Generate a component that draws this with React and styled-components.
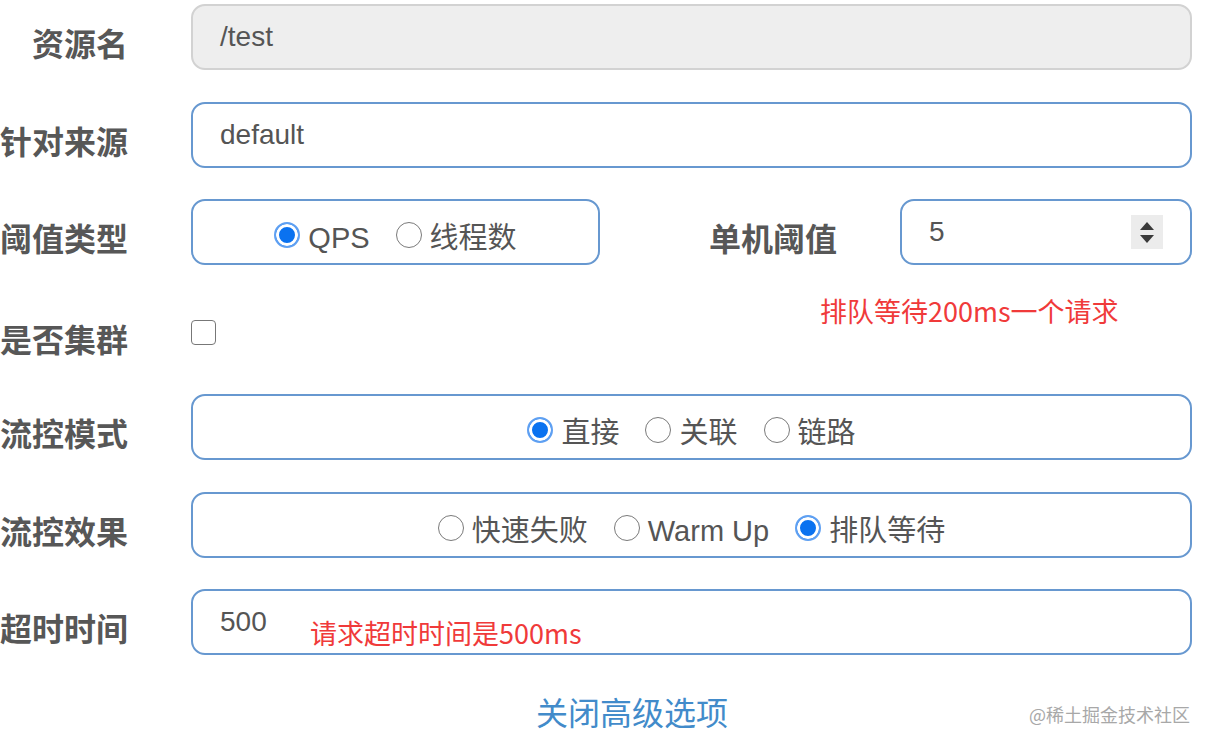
import styled, { createGlobalStyle } from "styled-components";

const GlobalStyle = createGlobalStyle`
  html, body {
    margin: 0;
    background: #fff;
  }
  body {
    font-family: "Liberation Sans", "Noto Sans CJK SC", sans-serif;
  }
`;

const Form = styled.div`
  position: relative;
  width: 1192px;
  padding-top: 4px;
  display: flex;
  flex-direction: column;
  gap: 31.5px;
`;

const Row = styled.div`
  display: flex;
  align-items: center;
  gap: 63px;
  min-height: 66px;
  box-sizing: border-box;
  padding-top: ${(p) => p.$pad || 0}px;
`;

const Label = styled.div`
  flex: none;
  width: ${(p) => p.$width || "128px"};
  text-align: right;
  padding-top: 10px;
  font-family: "Noto Sans CJK SC", sans-serif;
  font-size: 32px;
  font-weight: 700;
  color: #575757;
  white-space: nowrap;
  line-height: 40px;
`;

const Field = styled.div`
  position: relative;
  flex: ${(p) => (p.$width ? "none" : "1")};
  width: ${(p) => p.$width || "auto"};
  height: 66px;
  box-sizing: border-box;
  display: flex;
  align-items: center;
  justify-content: ${(p) => (p.$center ? "center" : "flex-start")};
  gap: ${(p) => (p.$center ? "26px" : "0")};
  padding: ${(p) => (p.$center ? "12px 0 0" : "0 27px 0 27px")};
  border: 2px solid ${(p) => (p.$disabled ? "#d2d2d2" : "#6798d0")};
  border-radius: 14px;
  background: ${(p) => (p.$disabled ? "#eeeeee" : "#fff")};
  font-size: 28px;
  color: #555;
`;

const Split = styled.div`
  flex: 1;
  display: flex;
  align-items: center;
`;

const SideLabel = styled(Label)`
  flex: 1;
  width: auto;
  margin-right: 63px;
`;

const Option = styled.label`
  display: flex;
  align-items: center;
  gap: 8px;
  font-family: "Liberation Sans", "Noto Sans CJK SC", sans-serif;
  font-size: 29px;
  color: #555;
  line-height: 40px;
  white-space: nowrap;
`;

const RadioDot = styled.span`
  flex: none;
  width: 26px;
  height: 26px;
  box-sizing: border-box;
  border-radius: 50%;
  margin-top: -6px;
  border: ${(p) => (p.$checked ? "2px solid #5fa0f2" : "1.5px solid #7a7a7a")};
  background: ${(p) => (p.$checked ? "#0a72f0" : "#fff")};
  box-shadow: ${(p) => (p.$checked ? "inset 0 0 0 3px #fff" : "none")};
`;

const Checkbox = styled.span`
  width: 25px;
  height: 25px;
  box-sizing: border-box;
  border: 1.5px solid #777;
  border-radius: 4px;
  background: #fff;
`;

const Spinner = styled.span`
  margin-left: auto;
  width: 32px;
  height: 34px;
  background: #ececec;
  display: flex;
  flex-direction: column;
  align-items: center;
  justify-content: center;
  gap: 5px;
`;

const Arrow = styled.span`
  width: 0;
  height: 0;
  border-left: 7px solid transparent;
  border-right: 7px solid transparent;
  ${(p) =>
    p.$up ? "border-bottom: 8px solid #3a3a3a;" : "border-top: 8px solid #3a3a3a;"}
`;

const Note = styled.span`
  position: absolute;
  left: ${(p) => p.$left}px;
  top: ${(p) => p.$top}px;
  font-family: "Noto Sans CJK SC", sans-serif;
  font-size: 27px;
  line-height: 32px;
  color: #f03a3a;
  white-space: nowrap;
`;

const Footer = styled.div`
  position: relative;
  height: 48px;
  display: flex;
  justify-content: center;
  padding-left: 72px;
`;

const Link = styled.a`
  font-family: "Noto Sans CJK SC", sans-serif;
  font-size: 32px;
  line-height: 48px;
  color: #428bca;
  text-decoration: none;
  cursor: pointer;
`;

const Watermark = styled.span`
  position: absolute;
  right: 2px;
  top: 15px;
  font-family: "Noto Sans CJK SC", sans-serif;
  font-size: 18px;
  line-height: 24px;
  color: #a8a8a8;
`;

function Radio({ checked, children }) {
  return (
    <Option>
      <RadioDot $checked={checked} />
      {children}
    </Option>
  );
}

export default function App() {
  return (
    <>
      <GlobalStyle />
      <Form>
        <Row>
          <Label>资源名</Label>
          <Field $disabled>/test</Field>
        </Row>
        <Row>
          <Label>针对来源</Label>
          <Field>default</Field>
        </Row>
        <Row>
          <Label>阈值类型</Label>
          <Split>
            <Field $width="409px" $center>
              <Radio checked>QPS</Radio>
              <Radio>线程数</Radio>
            </Field>
            <SideLabel>单机阈值</SideLabel>
            <Field $width="292px">
              5
              <Spinner>
                <Arrow $up />
                <Arrow />
              </Spinner>
            </Field>
          </Split>
        </Row>
        <Row $pad={6}>
          <Label>是否集群</Label>
          <Checkbox />
        </Row>
        <Row>
          <Label>流控模式</Label>
          <Field $center>
            <Radio checked>直接</Radio>
            <Radio>关联</Radio>
            <Radio>链路</Radio>
          </Field>
        </Row>
        <Row>
          <Label>流控效果</Label>
          <Field $center>
            <Radio>快速失败</Radio>
            <Radio>Warm Up</Radio>
            <Radio checked>排队等待</Radio>
          </Field>
        </Row>
        <Row>
          <Label>超时时间</Label>
          <Field>
            500
            <Note $left={117} $top={26}>请求超时时间是500ms</Note>
          </Field>
        </Row>
        <Footer>
          <Link>关闭高级选项</Link>
          <Watermark>@稀土掘金技术社区</Watermark>
        </Footer>
        <Note $left={820} $top={295}>排队等待200ms一个请求</Note>
      </Form>
    </>
  );
}
